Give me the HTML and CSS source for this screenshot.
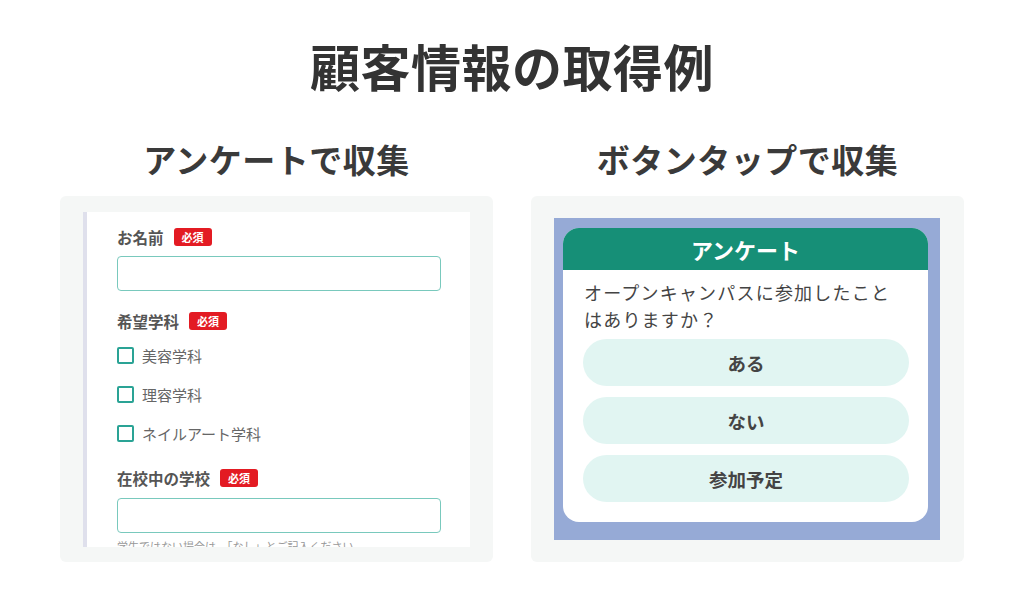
FILE: index.html
```html
<!DOCTYPE html>
<html lang="ja">
<head>
<meta charset="utf-8">
<link rel="stylesheet" href="styles.css">
</head>
<body>
<main class="page">
  <h1 class="title">顧客情報の取得例</h1>
  <div class="columns">
    <section class="col">
      <h2 class="subtitle">アンケートで収集</h2>
      <div class="panel panel-form">
        <div class="form-shot">
          <div class="field-label"><span>お名前</span><span class="badge">必須</span></div>
          <div class="input"></div>
          <div class="field-label gap-lg"><span>希望学科</span><span class="badge">必須</span></div>
          <ul class="checks">
            <li><span class="box"></span>美容学科</li>
            <li><span class="box"></span>理容学科</li>
            <li><span class="box"></span>ネイルアート学科</li>
          </ul>
          <div class="field-label gap-xl"><span>在校中の学校</span><span class="badge">必須</span></div>
          <div class="input"></div>
          <p class="note">学生ではない場合は、「なし」とご記入ください</p>
        </div>
      </div>
    </section>
    <section class="col">
      <h2 class="subtitle">ボタンタップで収集</h2>
      <div class="panel panel-btn">
        <div class="blue-area">
          <div class="card">
            <div class="card-head">アンケート</div>
            <p class="question">オープンキャンパスに参加したこと<br>はありますか？</p>
            <div class="choices">
              <div class="choice">ある</div>
              <div class="choice">ない</div>
              <div class="choice">参加予定</div>
            </div>
          </div>
        </div>
      </div>
    </section>
  </div>
</main>
</body>
</html>
```

FILE: styles.css
```css
* { box-sizing: border-box; }
html, body { margin: 0; padding: 0; background: #fff; }
body {
  font-family: "Noto Sans CJK JP", "Noto Sans", sans-serif;
  color: #3a3a3a;
  width: 1024px;
  height: 597px;
  overflow: hidden;
}
.page { padding-top: 34px; }
.title {
  margin: 0;
  text-align: center;
  font-size: 50px;
  line-height: 62px;
  font-weight: 700;
  color: #333;
  letter-spacing: 0.5px;
}
.columns {
  display: flex;
  gap: 38px;
  padding: 0 60px;
  margin-top: 40px;
}
.col { width: 433px; }
.subtitle {
  margin: 0;
  text-align: center;
  font-size: 33px;
  line-height: 46px;
  font-weight: 700;
  color: #3a3a3a;
  letter-spacing: 0.5px;
}
.panel {
  margin-top: 14px;
  height: 366px;
  background: #f5f7f6;
  border-radius: 6px;
}
.panel-form { padding: 16px 23px 15px; }
.form-shot {
  height: 335px;
  background: #fff;
  border-left: 4px solid #dfe0ec;
  overflow: hidden;
  padding: 16px 0 0 30px;
}
.field-label {
  display: flex;
  align-items: center;
  height: 18px;
  font-size: 15.5px;
  font-weight: 700;
  color: #555;
}
.field-label span:first-child { margin-right: 10px; }
.gap-lg { margin-top: 21px; }
.gap-xl { margin-top: 27px; }
.badge {
  display: inline-flex;
  align-items: center;
  justify-content: center;
  width: 38px;
  height: 18px;
  background: #e31b23;
  color: #fff;
  border-radius: 3px;
  font-size: 11px;
  font-weight: 700;
}
.input {
  margin-top: 10px;
  width: 324px;
  height: 35px;
  border: 1.5px solid #79c9bd;
  border-radius: 4px;
}
.gap-xl + .input { margin-top: 11px; }
.checks {
  list-style: none;
  margin: 17px 0 0;
  padding: 0;
  display: flex;
  flex-direction: column;
  gap: 22px;
}
.checks li {
  display: flex;
  align-items: center;
  height: 17px;
  font-size: 15px;
  color: #666;
}
.box {
  width: 17px;
  height: 17px;
  border: 2px solid #2aa395;
  border-radius: 2px;
  margin-right: 8px;
}
.note {
  margin: 6px 0 0;
  font-size: 11px;
  color: #999;
  line-height: 14px;
}
.panel-btn { padding: 22px 24px 22px 23px; }
.blue-area {
  height: 322px;
  background: #96aad6;
  padding: 10px 12px 0 9px;
}
.card {
  height: 294px;
  background: #fff;
  border-radius: 16px;
  overflow: hidden;
}
.card-head {
  height: 42px;
  background: #168f77;
  color: #fff;
  font-size: 22px;
  font-weight: 700;
  text-align: center;
  line-height: 42px;
}
.question {
  margin: 9px 0 0;
  padding-left: 21px;
  font-size: 18px;
  line-height: 27px;
  letter-spacing: 1.2px;
  color: #444;
}
.choices {
  margin-top: 6px;
  padding: 0 19px 0 20px;
  display: flex;
  flex-direction: column;
  gap: 11px;
}
.choice {
  height: 47px;
  border-radius: 24px;
  background: #e1f5f2;
  display: flex;
  align-items: center;
  justify-content: center;
  font-size: 18.5px;
  font-weight: 700;
  color: #444;
}
```
